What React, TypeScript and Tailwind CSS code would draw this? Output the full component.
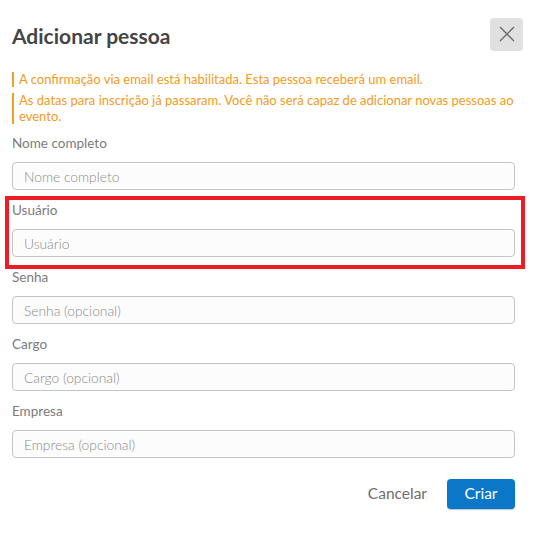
import React from 'react';

const font = { fontFamily: 'Lato, "Open Sans", sans-serif' };

interface FieldProps {
  label: string;
  placeholder: string;
}

const Field: React.FC<FieldProps> = ({ label, placeholder }) => (
  <div className="flex flex-col">
    <label className="text-[13.5px] leading-4 text-[#7b7b7b]">{label}</label>
    <input
      placeholder={placeholder}
      className="mt-[11px] h-[28px] w-full rounded-[4px] border border-[#bfc6ca] bg-[#fcfcfc] px-[11px] text-[13.8px] font-light text-[#444] outline-none placeholder:text-[#8a8a8a]"
    />
  </div>
);

export default function App() {
  return (
    <div className="h-[544px] w-[544px] bg-white" style={font}>
      <div className="flex items-center justify-between pl-3 pr-[21px] pt-[17px]">
        <h2 className="mt-[3px] text-[21px] font-bold text-[#454545]">Adicionar pessoa</h2>
        <button className="flex h-[33px] w-[33px] items-center justify-center rounded-[4px] bg-[#e0e0e0]">
          <svg width="16" height="16" viewBox="0 0 16 16" stroke="#6a6a6a" strokeWidth="1.4" fill="none">
            <path d="M1 1L15 15M15 1L1 15" />
          </svg>
        </button>
      </div>

      <div className="mt-[20px] flex w-[515px] flex-col gap-[6px] pl-3 text-[13px] leading-[15.5px] text-[#f29b1d]">
        <p className="border-l-2 border-[#f5a021] pl-[5px]">
          A confirmação via email está habilitada. Esta pessoa receberá um email.
        </p>
        <p className="border-l-2 border-[#f5a021] pl-[5px]">
          As datas para inscrição já passaram. Você não será capaz de adicionar novas pessoas ao evento.
        </p>
      </div>

      <form className="mt-[11px] flex w-[515px] flex-col gap-[12px] pl-3">
        <Field label="Nome completo" placeholder="Nome completo" />
        <div className="relative">
          <Field label="Usuário" placeholder="Usuário" />
          <div className="pointer-events-none absolute -bottom-[12px] -left-[7px] -right-[10px] -top-[6px] border-4 border-[#ee1c25]" />
        </div>
        <Field label="Senha" placeholder="Senha (opcional)" />
        <Field label="Cargo" placeholder="Cargo (opcional)" />
        <Field label="Empresa" placeholder="Empresa (opcional)" />
        <div className="mt-[9px] flex items-center justify-end gap-5">
          <button type="button" className="text-[15.5px] text-[#6e6e6e]">Cancelar</button>
          <button
            type="button"
            className="h-[30px] w-[68px] rounded-[4px] bg-[#0b77c9] text-[15.5px] text-white shadow-[0_1px_1px_rgba(0,0,0,0.25)]"
          >
            Criar
          </button>
        </div>
      </form>
    </div>
  );
}
